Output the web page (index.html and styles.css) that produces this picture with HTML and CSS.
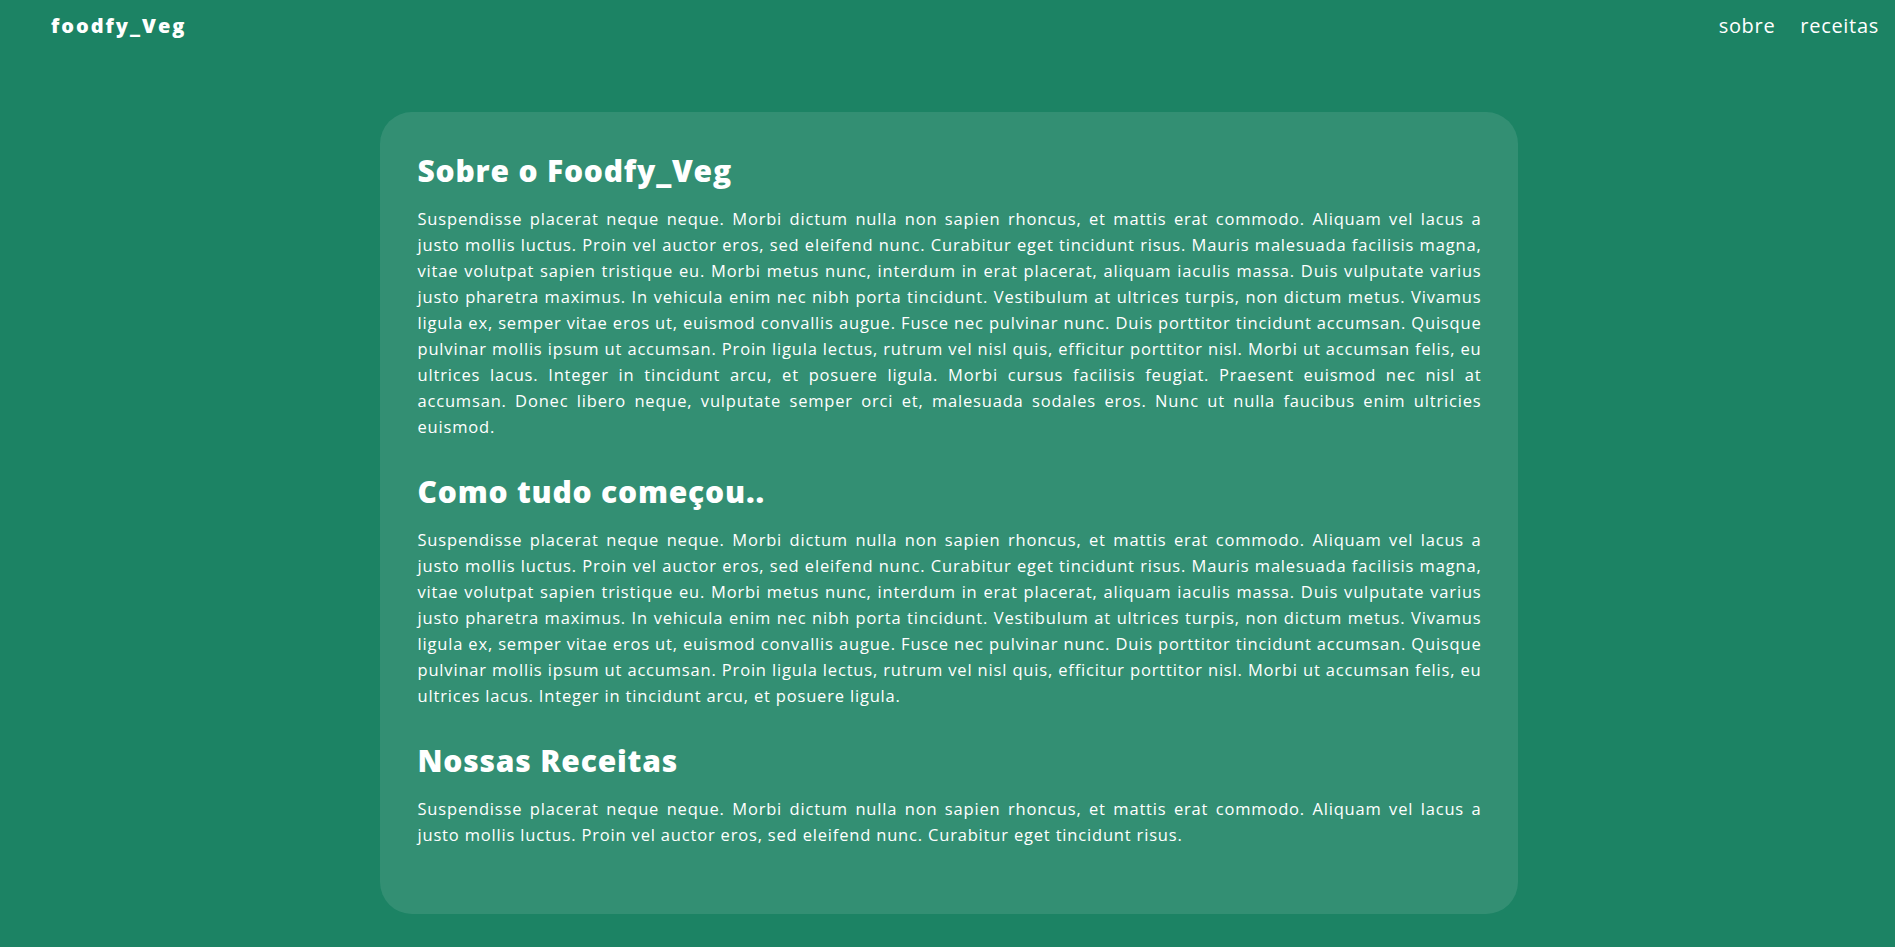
FILE: index.html
```html
<!DOCTYPE html>
<html lang="pt-BR">
<head>
<meta charset="utf-8">
<title>Foodfy_Veg - Sobre</title>
<link rel="stylesheet" href="styles.css">
</head>
<body>
<header class="topbar">
  <a class="logo" href="#">foodfy_Veg</a>
  <nav class="nav">
    <a href="#">sobre</a>
    <a href="#">receitas</a>
  </nav>
</header>
<main class="main">
  <article class="card">
    <section class="block">
      <h2>Sobre o Foodfy_Veg</h2>
      <p>Suspendisse placerat neque neque. Morbi dictum nulla non sapien rhoncus, et mattis erat commodo. Aliquam vel lacus a justo mollis luctus. Proin vel auctor eros, sed eleifend nunc. Curabitur eget tincidunt risus. Mauris malesuada facilisis magna, vitae volutpat sapien tristique eu. Morbi metus nunc, interdum in erat placerat, aliquam iaculis massa. Duis vulputate varius justo pharetra maximus. In vehicula enim nec nibh porta tincidunt. Vestibulum at ultrices turpis, non dictum metus. Vivamus ligula ex, semper vitae eros ut, euismod convallis augue. Fusce nec pulvinar nunc. Duis porttitor tincidunt accumsan. Quisque pulvinar mollis ipsum ut accumsan. Proin ligula lectus, rutrum vel nisl quis, efficitur porttitor nisl. Morbi ut accumsan felis, eu ultrices lacus. Integer in tincidunt arcu, et posuere ligula. Morbi cursus facilisis feugiat. Praesent euismod nec nisl at accumsan. Donec libero neque, vulputate semper orci et, malesuada sodales eros. Nunc ut nulla faucibus enim ultricies euismod.</p>
    </section>
    <section class="block">
      <h2>Como tudo começou..</h2>
      <p>Suspendisse placerat neque neque. Morbi dictum nulla non sapien rhoncus, et mattis erat commodo. Aliquam vel lacus a justo mollis luctus. Proin vel auctor eros, sed eleifend nunc. Curabitur eget tincidunt risus. Mauris malesuada facilisis magna, vitae volutpat sapien tristique eu. Morbi metus nunc, interdum in erat placerat, aliquam iaculis massa. Duis vulputate varius justo pharetra maximus. In vehicula enim nec nibh porta tincidunt. Vestibulum at ultrices turpis, non dictum metus. Vivamus ligula ex, semper vitae eros ut, euismod convallis augue. Fusce nec pulvinar nunc. Duis porttitor tincidunt accumsan. Quisque pulvinar mollis ipsum ut accumsan. Proin ligula lectus, rutrum vel nisl quis, efficitur porttitor nisl. Morbi ut accumsan felis, eu ultrices lacus. Integer in tincidunt arcu, et posuere ligula.</p>
    </section>
    <section class="block">
      <h2>Nossas Receitas</h2>
      <p>Suspendisse placerat neque neque. Morbi dictum nulla non sapien rhoncus, et mattis erat commodo. Aliquam vel lacus a justo mollis luctus. Proin vel auctor eros, sed eleifend nunc. Curabitur eget tincidunt risus.</p>
    </section>
  </article>
</main>
</body>
</html>
```

FILE: styles.css
```css
* {
  box-sizing: border-box;
}

html, body {
  margin: 0;
  padding: 0;
}

body {
  background: #1c8364;
  color: #ffffff;
  font-family: "Open Sans", "Liberation Sans", sans-serif;
  min-height: 100vh;
}

a {
  color: #ffffff;
  text-decoration: none;
}

.topbar {
  height: 50px;
  display: flex;
  align-items: center;
  justify-content: space-between;
  padding: 0 16px 0 51px;
}

.logo {
  font-weight: 800;
  font-size: 20px;
  letter-spacing: 2px;
}

.nav {
  display: flex;
  gap: 25px;
  font-size: 20px;
  letter-spacing: 0.7px;
}

.main {
  padding: 62px 0 0 2px;
  display: flex;
  justify-content: center;
}

.card {
  width: 1138px;
  background: rgba(255, 255, 255, 0.1);
  border-radius: 32px;
  padding: 37px 36px 36px 38px;
}

.block {
  margin-bottom: 30px;
}

.block h2 {
  margin: 0;
  font-size: 30px;
  line-height: 44px;
  font-weight: 800;
  letter-spacing: 0.8px;
}

.block p {
  margin: 13px 0 0;
  font-size: 16.5px;
  line-height: 26px;
  letter-spacing: 0.82px;
  text-align: justify;
}
```
